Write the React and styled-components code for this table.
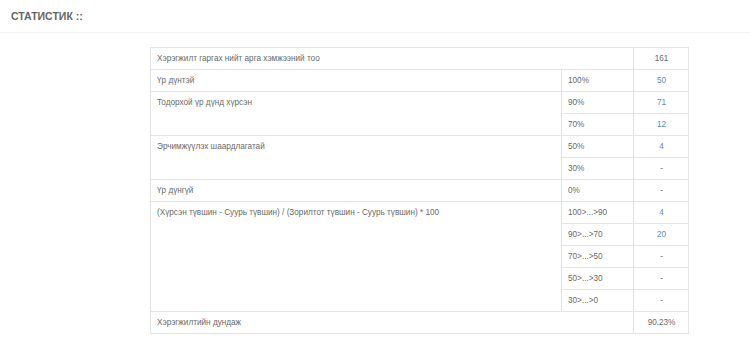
import React from 'react';
import styled, { createGlobalStyle } from 'styled-components';

const GlobalStyle = createGlobalStyle`
  body {
    margin: 0;
    background: #fff;
    font-family: 'Liberation Sans', Arial, sans-serif;
  }
`;

const Header = styled.div`
  height: 32px;
  padding: 0 11px;
  display: flex;
  align-items: center;
  border-bottom: 1px solid #f1f1f1;
`;

const Title = styled.h3`
  margin: 0;
  font-size: 10.5px;
  font-weight: bold;
  color: #666;
`;

const Body = styled.div`
  padding: 14px 0 0 150px;
`;

const Table = styled.table`
  width: 538px;
  border-collapse: collapse;
  font-size: 8.2px;
  color: #666;
  table-layout: fixed;
`;

const Cell = styled.td`
  border: 1px solid #e4e4e4;
  padding: 5px 5px 5px 6px;
  line-height: 11px;
  height: 11px;
  vertical-align: top;
  white-space: nowrap;
  text-align: ${(p) => (p.$center ? 'center' : 'left')};
  color: ${(p) => (p.$link ? '#5b8ac4' : '#6a6a6a')};
`;

const rows = [
  { label: 'Үр дүнтэй', span: 1, items: [['100%', '50', true]] },
  { label: 'Тодорхой үр дүнд хүрсэн', span: 2, items: [['90%', '71', true], ['70%', '12', true]] },
  { label: 'Эрчимжүүлэх шаардлагатай', span: 2, items: [['50%', '4', true], ['30%', '-', false]] },
  { label: 'Үр дүнгүй', span: 1, items: [['0%', '-', false]] },
  {
    label: '(Хүрсэн түвшин - Суурь түвшин) / (Зорилтот түвшин - Суурь түвшин) * 100',
    span: 5,
    items: [
      ['100>...>90', '4', true],
      ['90>...>70', '20', true],
      ['70>...>50', '-', false],
      ['50>...>30', '-', false],
      ['30>...>0', '-', false],
    ],
  },
];

export default function App() {
  return (
    <>
      <GlobalStyle />
      <Header>
        <Title>СТАТИСТИК ::</Title>
      </Header>
      <Body>
        <Table>
          <colgroup>
            <col style={{ width: 411 }} />
            <col style={{ width: 72 }} />
            <col style={{ width: 55 }} />
          </colgroup>
          <tbody>
            <tr>
              <Cell colSpan={2}>Хэрэгжилт гаргах нийт арга хэмжээний тоо</Cell>
              <Cell $center>161</Cell>
            </tr>
            {rows.map((group) =>
              group.items.map(([range, value, link], i) => (
                <tr key={group.label + range}>
                  {i === 0 && <Cell rowSpan={group.span}>{group.label}</Cell>}
                  <Cell>{range}</Cell>
                  <Cell $center $link={link}>{value}</Cell>
                </tr>
              ))
            )}
            <tr>
              <Cell colSpan={2}>Хэрэгжилтийн дундаж</Cell>
              <Cell $center>90.23%</Cell>
            </tr>
          </tbody>
        </Table>
      </Body>
    </>
  );
}
